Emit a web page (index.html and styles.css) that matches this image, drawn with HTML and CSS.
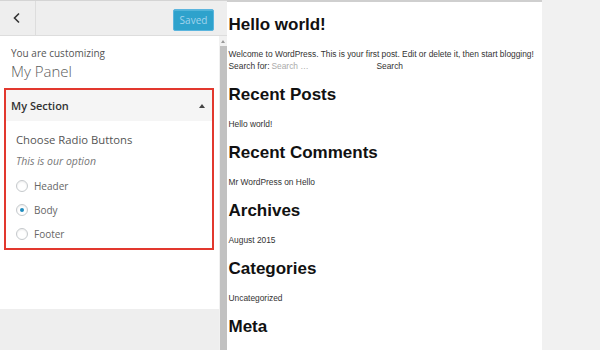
FILE: index.html
```html
<!DOCTYPE html>
<html>
<head>
<meta charset="utf-8">
<link rel="stylesheet" href="styles.css">
</head>
<body>
<div class="app">
  <aside class="sidebar">
    <header class="topbar">
      <button class="back" aria-label="Back">
        <svg width="10" height="12" viewBox="0 0 10 12"><path d="M7 1.5 L2.5 6 L7 10.5" fill="none" stroke="#333" stroke-width="1.6"/></svg>
      </button>
      <div class="actions"><button class="saved">Saved</button></div>
    </header>
    <div class="scrollarea">
      <div class="column">
        <div class="panel">
          <div class="info">
            <span class="info-sub">You are customizing</span>
            <span class="info-title">My Panel</span>
          </div>
          <section class="section">
            <div class="section-head">
              <span class="section-title">My Section</span>
              <span class="tri"></span>
            </div>
            <div class="section-body">
              <div class="ctl-title">Choose Radio Buttons</div>
              <div class="ctl-desc">This is our option</div>
              <label class="radio"><span class="circle"></span><span class="rlabel">Header</span></label>
              <label class="radio"><span class="circle on"></span><span class="rlabel">Body</span></label>
              <label class="radio"><span class="circle"></span><span class="rlabel">Footer</span></label>
            </div>
          </section>
        </div>
        <div class="overlay-bottom"></div>
      </div>
      <div class="scrollbar">
        <div class="sb-up"><span class="sb-arrow"></span></div>
        <div class="sb-thumb"></div>
      </div>
    </div>
  </aside>
  <main class="preview">
    <h2 class="ph">Hello world!</h2>
    <p class="pt">Welcome to WordPress. This is your first post. Edit or delete it, then start blogging!</p>
    <div class="pt search"><span>Search for:</span><span class="ph-input">Search …</span><span class="sbtn">Search</span></div>
    <h2 class="ph">Recent Posts</h2>
    <p class="pt">Hello world!</p>
    <h2 class="ph">Recent Comments</h2>
    <p class="pt">Mr WordPress on Hello</p>
    <h2 class="ph">Archives</h2>
    <p class="pt">August 2015</p>
    <h2 class="ph">Categories</h2>
    <p class="pt">Uncategorized</p>
    <h2 class="ph">Meta</h2>
  </main>
  <div class="rightfill"></div>
</div>
</body>
</html>
```
FILE: styles.css
```css
* { box-sizing: border-box; }
html, body { margin: 0; padding: 0; }
body { width: 600px; height: 350px; overflow: hidden; background: #f1f1f1; font-family: "Open Sans", "Liberation Sans", sans-serif; }
.app { display: flex; width: 600px; height: 350px; }

.sidebar { width: 227px; height: 350px; display: flex; flex-direction: column; background: #eee; }
.topbar { height: 36px; display: flex; align-items: stretch; background: #eee; border-top: 1px solid #d4d4d4; border-bottom: 1px solid #ddd; flex: none; }
.back { width: 36px; border: 0; border-right: 1px solid #ddd; background: #eee; padding: 0; display: flex; align-items: center; justify-content: center; padding-right: 2px; }
.actions { flex: 1; display: flex; align-items: center; justify-content: flex-end; padding-right: 13px; padding-top: 3px; }
.saved { width: 41px; height: 22px; padding: 0; border: 1px solid #5bb5de; border-radius: 2px; background: #2ea2cc; color: #a2d4ec; font-family: "Open Sans", sans-serif; font-size: 10px; line-height: 20px; box-shadow: inset 0 1px 0 rgba(120,200,230,.5); }

.scrollarea { flex: 1; display: flex; min-height: 0; }
.column { width: 219px; display: flex; flex-direction: column; }
.panel { background: #fff; height: 273px; padding-top: 1px; }
.overlay-bottom { flex: 1; background: #eee; }

.info { padding: 9px 11px 0; display: flex; flex-direction: column; }
.info-sub { font-size: 10px; line-height: 14px; color: #555; }
.info-title { font-size: 15px; line-height: 20px; color: #5c5c5c; font-weight: 300; margin-top: 1px; }

.section { margin: 7px 5px 0 4px; border: 2px solid #e2382e; }
.section-head { height: 31px; background: #f5f5f5; display: flex; align-items: center; justify-content: space-between; padding: 0 7px 0 5px; }
.section-title { font-size: 11px; font-weight: 600; color: #333; }
.tri { width: 0; height: 0; border-left: 3px solid transparent; border-right: 3px solid transparent; border-bottom: 4px solid #444; }
.section-body { padding: 11px 8px 2px 10px; }
.ctl-title { font-size: 11.3px; line-height: 16px; color: #555; }
.ctl-desc { font-size: 10.5px; line-height: 14px; color: #777; font-style: italic; margin-top: 6px; margin-bottom: 6px; }
.radio { display: flex; align-items: center; height: 24px; }
.circle { width: 12px; height: 12px; border: 1px solid #c5c9cc; border-radius: 50%; background: #fff; box-shadow: inset 0 1px 2px rgba(0,0,0,.08); margin-right: 6px; display: flex; align-items: center; justify-content: center; }
.circle.on::after { content: ""; width: 4px; height: 4px; border-radius: 50%; background: #1e8cbe; }
.rlabel { font-size: 10px; color: #666; }

.scrollbar { width: 8px; display: flex; flex-direction: column; background: #f1f1f1; }
.sb-up { height: 10px; display: flex; justify-content: center; align-items: center; }
.sb-arrow { width: 0; height: 0; border-left: 2px solid transparent; border-right: 2px solid transparent; border-bottom: 3px solid #999; }
.sb-thumb { flex: 1; background: #c1c1c1; margin: 0 0.5px; }

.preview { width: 315px; height: 350px; background: #fff; border-top: 2px solid #cfcfcf; padding-left: 1.5px; font-family: "Liberation Sans", Arial, sans-serif; overflow: hidden; }
.ph { font-size: 17px; line-height: 20px; margin: 13px 0; font-weight: bold; color: #111; }
.pt { font-size: 8.4px; line-height: 12px; margin: 0; color: #333; white-space: nowrap; }
.search { display: flex; }
.ph-input { width: 105px; color: #aaa; margin-left: 2px; }
.sbtn { color: #333; }
.rightfill { flex: 1; background: #f1f1f1; }
```
